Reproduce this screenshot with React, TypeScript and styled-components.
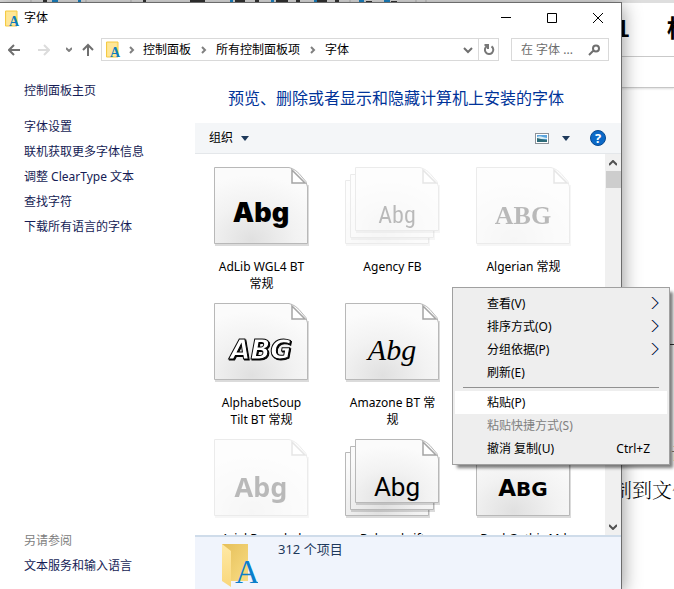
import React from 'react';
import styled, { createGlobalStyle, css } from 'styled-components';

const Global = createGlobalStyle`
  * { box-sizing: border-box; }
  html, body, #root { height: 100%; margin: 0; }
  body {
    overflow: hidden;
    background: #fff;
    color: #000;
    font: 12px/18px "Noto Sans", "Noto Sans CJK SC", sans-serif;
  }
  button, input { font: inherit; color: inherit; }
  button { padding: 0; border: 0; background: none; }
  svg { display: block; flex: none; }
`;

const Desktop = styled.div`
  position: relative;
  height: 100vh;
  overflow: hidden;
`;

/* ---------- document behind the window ---------- */

const Document = styled.div`
  display: flex;
  flex-direction: column;
  height: 100%;
`;
const Ribbon = styled.div`
  height: 3px;
  overflow: hidden;
  background: #dedede;
`;
const Gallery = styled.div`
  display: flex;
  justify-content: flex-end;
  height: 54px;
  padding-top: 10px;
  border-bottom: 1px solid #c8c8c8;
  font: bold 24px/32px "Liberation Sans", "Noto Sans CJK SC", sans-serif;
`;
const StyleName = styled.span<{ $width: number }>`
  width: ${p => p.$width}px;
  overflow: hidden;
  white-space: nowrap;
`;
const Ruler = styled.div`
  height: 31px;
  border-bottom: 1px solid #c6c6c6;
  box-shadow: 0 1px 2px #ddd;
`;
const Paper = styled.div`
  display: flex;
  flex-direction: column;
  align-items: flex-end;
  padding-top: 256px;
  font: 300 20px/38px "Noto Serif CJK SC", "Noto Sans CJK SC", serif;
`;
const Rule = styled.div`
  width: 4px;
  height: 1px;
  margin-bottom: 88px;
  background: #333;
`;
const DocLine = styled.div<{ $width: number }>`
  width: ${p => p.$width}px;
  overflow: hidden;
  white-space: nowrap;
`;

/* ---------- window frame ---------- */

const Window = styled.main`
  position: absolute;
  inset: 2px 52px 0 0;
  display: flex;
  flex-direction: column;
  border: solid #6c6c6c;
  border-width: 1px 1px 0 0;
  background: #fff;
  box-shadow: 0 4px 18px rgba(0, 0, 0, 0.45);
`;
const TitleBar = styled.header`
  display: flex;
  align-items: center;
  height: 30px;
  padding-left: 5px;
  gap: 4px;
`;
const Title = styled.h1`
  flex: 1;
  margin: 0;
  font-size: 12px;
  font-weight: 400;
`;
const CaptionButtons = styled.div`
  display: flex;
`;
const CaptionButton = styled.button`
  display: grid;
  place-items: center;
  width: 46px;
  height: 30px;
`;
const NavBar = styled.nav`
  display: flex;
  align-items: center;
  height: 33px;
  padding: 0 12px 0 6px;
`;
const NavButton = styled.button<{ $width: number; $before?: number }>`
  display: grid;
  place-items: center;
  width: ${p => p.$width}px;
  height: 22px;
  margin-left: ${p => p.$before ?? 0}px;
`;
const Address = styled.div`
  display: flex;
  align-items: center;
  flex: 1;
  height: 23px;
  margin-left: 3px;
  padding-left: 4px;
  border: 1px solid #d9d9d9;
`;
const Crumb = styled.button`
  white-space: nowrap;
`;
const CrumbGap = styled.span<{ $width: number }>`
  display: grid;
  place-items: center;
  width: ${p => p.$width}px;
`;
const AddressEnd = styled.div`
  display: flex;
  align-self: stretch;
  margin-left: auto;
`;
const RefreshButton = styled.button`
  display: grid;
  place-items: center;
  width: 20px;
  border-left: 1px solid #d9d9d9;
`;
const Search = styled.label`
  display: flex;
  align-items: center;
  width: 98px;
  height: 23px;
  margin-left: 12px;
  padding: 0 8px 0 9px;
  border: 1px solid #d9d9d9;
`;
const SearchInput = styled.input`
  flex: 1;
  min-width: 0;
  padding: 0;
  border: 0;
  outline: 0;
  background: none;
  &::placeholder { color: #6d6d6d; opacity: 1; }
`;

/* ---------- body ---------- */

const Body = styled.div`
  display: flex;
  flex: 1;
  min-height: 0;
`;
const Sidebar = styled.aside`
  display: flex;
  flex-direction: column;
  width: 195px;
  padding: 12px 0 11px 24px;
`;
const SideLink = styled.a<{ $first?: boolean }>`
  height: 25px;
  line-height: 25px;
  color: #151c55;
  text-decoration: none;
  ${p => p.$first && css`margin-bottom: 11px;`}
`;
const SeeAlso = styled.div`
  margin-top: auto;
  line-height: 25px;
  color: #808080;
`;
const Content = styled.section`
  display: flex;
  flex: 1;
  flex-direction: column;
  min-width: 0;
`;
const Heading = styled.h2`
  margin: 0;
  padding: 21px 0 14px 33px;
  color: #003399;
  font-size: 16px;
  font-weight: 400;
  line-height: 22px;
  white-space: nowrap;
`;
const Toolbar = styled.div`
  display: flex;
  align-items: center;
  height: 31px;
  flex: none;
  padding: 0 15px 0 14px;
  border-bottom: 1px solid #e4e7ea;
  background: #f4f6f8;
`;
const ToolButton = styled.button<{ $push?: boolean; $gap?: number }>`
  display: flex;
  align-items: center;
  gap: ${p => p.$gap ?? 0}px;
  ${p => p.$push && css`margin-left: auto;`}
`;
const HelpButton = styled.button`
  margin-left: 20px;
`;
const FileArea = styled.div`
  display: flex;
  flex: 1;
  min-height: 0;
`;
const FontGrid = styled.div`
  display: grid;
  grid-template-columns: repeat(auto-fill, 131px);
  grid-auto-rows: 136px;
  flex: 1;
  padding: 12px 0 0 1px;
  overflow: hidden;
`;
const Tile = styled.figure`
  display: flex;
  flex-direction: column;
  align-items: center;
  margin: 0;
`;
const TileName = styled.figcaption`
  width: 92px;
  margin-top: 12px;
  line-height: 17px;
  text-align: center;
`;
const ScrollBar = styled.div`
  display: flex;
  flex-direction: column;
  align-items: center;
  width: 16px;
  background: #f0f0f0;
`;
const ScrollButton = styled.button`
  display: grid;
  place-items: center;
  width: 16px;
  height: 17px;
`;
const Thumb = styled.div`
  width: 15px;
  height: 17px;
  margin-bottom: auto;
  background: #cdcdcd;
`;
const StatusBar = styled.footer`
  display: flex;
  flex: none;
  height: 54px;
  padding: 3px 0 0 25px;
  gap: 20px;
  overflow: hidden;
  border-top: 2px solid #cfdcea;
  background: #f0f4fc;
  color: #1e395b;
  font-size: 13px;
`;

/* ---------- context menu ---------- */

const Menu = styled.div`
  position: absolute;
  top: 287px;
  right: 4px;
  width: 218px;
  padding: 4px 2px;
  border: 1px solid #a0a0a0;
  background: #eee;
  box-shadow: 4px 4px 3px -1px rgba(0, 0, 0, 0.5);
`;
const MenuItem = styled.button<{ $active?: boolean }>`
  display: flex;
  align-items: center;
  justify-content: space-between;
  width: 100%;
  height: 23px;
  padding: 0 8px 0 32px;
  background: ${p => (p.$active ? '#fff' : 'none')};
  &:disabled { color: #808080; }
`;
const Shortcut = styled.span`
  margin-right: 9px;
`;
const Separator = styled.hr`
  height: 1px;
  margin: 3px 8px;
  border: 0;
  background: #919191;
`;

/* ---------- drawings ---------- */

const RibbonMarks = () => (
  <svg width="674" height="3">
    <path d="M31 0V3M86 0V3M131 0V3M350 0V3M416 0V3M426 0V3" stroke="#b5b5b5" />
    <path d="M43 1h4M143 1h3M190 1h15M235 1h10M255 1h4M276 1h12M296 1h4M317 1h10M335 1h4M366 2h6M391 2h6" stroke="#333" strokeWidth="2" />
    <path d="M52 1h6M78 1h3M230 1h3M271 1h3M314 1h3M359 1h5M384 1h6" stroke="#1a83c4" strokeWidth="2" />
  </svg>
);

const FontFolder = () => (
  <svg width="15" height="17" viewBox="0 0 15 17">
    <path d="M.5 1h11.5v15H.5z" fill="#ffe48e" stroke="#f4ca43" />
    <path d="M2 2h8v13H2z" fill="#ffe797" />
    <text x="4" y="16" fontFamily="Liberation Serif, serif" fontSize="14" fontWeight="700" fill="#0c7dbd">A</text>
  </svg>
);

const LargeFolder = () => (
  <svg width="38" height="48" viewBox="0 0 38 48">
    <defs>
      <linearGradient id="back" x2="1" y2="1"><stop stopColor="#e5bf59" /><stop offset="1" stopColor="#f9dc83" /></linearGradient>
      <linearGradient id="flap" x2="0" y2="1"><stop stopColor="#ffe9a5" /><stop offset="1" stopColor="#f9d77b" /></linearGradient>
    </defs>
    <path d="M2 4h26v37H2z" fill="url(#back)" />
    <path d="M2 4l9 7v36L2 41z" fill="url(#flap)" />
    <text x="15" y="43" fontFamily="Liberation Serif, serif" fontSize="34" fill="#0a7fcb">A</text>
  </svg>
);

type StrokeProps = { d: string; w: number; h: number; color?: string; sw?: number };
const Stroke = ({ d, w, h, color = '#6f6f6f', sw = 2 }: StrokeProps) => (
  <svg width={w} height={h} viewBox={`0 0 ${w} ${h}`} fill="none" stroke={color} strokeWidth={sw}>
    <path d={d} />
  </svg>
);

const CrumbSeparator = ({ width = 25 }: { width?: number }) => (
  <CrumbGap $width={width}><Stroke w={6} h={8} d="M1 1l3 3-3 3" color="#808080" /></CrumbGap>
);

const DownTriangle = () => (
  <svg width="8" height="5"><path d="M0 0h8L4 5z" fill="#1e395b" /></svg>
);

const ViewIcon = () => (
  <svg width="14" height="11" viewBox="0 0 14 11">
    <rect x=".5" y=".5" width="13" height="10" fill="#fff" stroke="#8d9299" />
    <path d="M2 2h10v7H2z" fill="#5ba4dd" />
    <path d="M2 4c3-2 5 0 10 1v1H2z" fill="#d9edf5" />
    <path d="M2 5l4 1 6 1v2H2z" fill="#2d6b79" />
  </svg>
);

const HelpIcon = () => (
  <svg width="16" height="16" viewBox="0 0 16 16">
    <circle cx="8" cy="8" r="7.5" fill="#0b69c7" stroke="#084a91" />
    <text x="8" y="12.5" textAnchor="middle" fontFamily="Open Sans, sans-serif" fontWeight="700" fontSize="13" fill="#fff">?</text>
  </svg>
);

const SubmenuArrow = () => (
  <svg width="8" height="14" viewBox="0 0 8 14" fill="none">
    <path d="M0 0l6 6-6 6" stroke="#f0b988" />
    <path d="M2 0l6 6-6 6" stroke="#6fb4f2" />
    <path d="M1 0l6 6-6 6" stroke="#3c3c66" />
  </svg>
);

type Sample = {
  text: string;
  family: string;
  size: number;
  weight?: number;
  italic?: boolean;
  outline?: boolean;
  restSize?: number;
  baseline?: number;
};
type FontEntry = { name: string; stacked?: boolean; hidden?: boolean; sample: Sample };

const PageShape = ({ x, y, w, h }: { x: number; y: number; w: number; h: number }) => (
  <g transform={`translate(${x} ${y})`}>
    <path d={`M1 ${h + 1}H${w}V18`} fill="none" stroke="#000" strokeOpacity=".14" strokeWidth="2" />
    <path d={`M.5 .5H${w - 19}Q${w - 12} 2 ${w - 6} 10Q${w - 1} 14 ${w - 0.5} 20V${h - 0.5}H.5z`} fill="url(#sheet)" stroke="#b8b8b8" />
  </g>
);

const FontIcon = ({ entry }: { entry: FontEntry }) => {
  const { sample: s, stacked, hidden } = entry;
  const left = stacked ? 10 : 0;
  const w = stacked ? 84 : 94;
  const h = stacked ? 64 : 77;
  const fold = left + w;
  return (
    <svg width="96" height="80" viewBox="0 0 96 80" opacity={hidden ? 0.27 : 1}>
      <defs>
        <radialGradient id="sheet" cx=".4" cy=".95" r=".85">
          <stop stopColor="#e0e0e0" /><stop offset=".55" stopColor="#f2f2f2" /><stop offset="1" stopColor="#fbfbfb" />
        </radialGradient>
      </defs>
      {stacked && <PageShape x={0} y={14} w={84} h={64} />}
      {stacked && <PageShape x={5} y={8} w={84} h={64} />}
      <PageShape x={left} y={1} w={w} h={h} />
      <path d={`M${fold - 16} 4V17H${fold - 3}z`} fill="#fff" stroke="#a5a5a5" strokeWidth="1.5" />
      <text
        x={stacked ? 52 : 47}
        y={s.baseline ?? 56}
        textAnchor="middle"
        fontFamily={s.family}
        fontSize={s.size}
        fontWeight={s.weight ?? 400}
        fontStyle={s.italic ? 'italic' : 'normal'}
        fill={s.outline ? '#fff' : '#000'}
        stroke={s.outline ? '#000' : 'none'}
        filter={s.outline ? 'drop-shadow(1px 1px 0 #000)' : undefined}
      >
        {s.restSize ? <>{s.text[0]}<tspan fontSize={s.restSize}>{s.text.slice(1)}</tspan></> : s.text}
      </text>
    </svg>
  );
};

// null keeps a cell of the grid empty
const fonts: (FontEntry | null)[] = [
  { name: 'AdLib WGL4 BT 常规', sample: { text: 'Abg', family: 'Inter, sans-serif', size: 27, weight: 900 } },
  { name: 'Agency FB', stacked: true, hidden: true, sample: { text: 'Abg', family: '"Liberation Sans Narrow", "Roboto Condensed", Roboto, sans-serif', size: 24, baseline: 57 } },
  { name: 'Algerian 常规', hidden: true, sample: { text: 'ABG', family: '"Liberation Serif", serif', size: 26, weight: 700, baseline: 58 } },
  { name: 'AlphabetSoup Tilt BT 常规', sample: { text: 'ABG', family: '"DejaVu Sans", sans-serif', size: 26, weight: 700, italic: true, outline: true, baseline: 57 } },
  { name: 'Amazone BT 常规', sample: { text: 'Abg', family: '"Liberation Serif", cursive', size: 30, italic: true, baseline: 58 } },
  null,
  { name: 'Arial Rounded MT 粗体', hidden: true, sample: { text: 'Abg', family: '"Noto Sans", sans-serif', size: 27, weight: 700, baseline: 59 } },
  { name: 'Bahnschrift', stacked: true, sample: { text: 'Abg', family: 'Roboto, sans-serif', size: 26, baseline: 58 } },
  { name: 'BankGothic Md BT', sample: { text: 'ABG', family: '"DejaVu Sans", sans-serif', size: 23, restSize: 20, weight: 700, baseline: 58 } },
];

const tasks = ['控制面板主页', '字体设置', '联机获取更多字体信息', '调整 ClearType 文本', '查找字符', '下载所有语言的字体'];

export default function App() {
  return (
    <>
      <Global />
      <Desktop>
        <Document>
          <Ribbon><RibbonMarks /></Ribbon>
          <Gallery>
            <StyleName $width={51}>1</StyleName>
            <StyleName $width={7}>标</StyleName>
          </Gallery>
          <Ruler />
          <Paper>
            <Rule />
            <DocLine $width={3}>击</DocLine>
            <DocLine $width={62}>制到文件</DocLine>
          </Paper>
        </Document>

        <Window>
          <TitleBar>
            <FontFolder />
            <Title>字体</Title>
            <CaptionButtons>
              <CaptionButton aria-label="最小化"><Stroke w={10} h={10} d="M0 4.5h10" color="#000" sw={1} /></CaptionButton>
              <CaptionButton aria-label="最大化"><Stroke w={10} h={10} d="M.5.5h9v9h-9z" color="#000" sw={1} /></CaptionButton>
              <CaptionButton aria-label="关闭"><Stroke w={10} h={10} d="M0 0l10 10M10 0L0 10" color="#000" sw={1} /></CaptionButton>
            </CaptionButtons>
          </TitleBar>
          <NavBar>
            <NavButton $width={16} aria-label="后退"><Stroke w={12} h={12} d="M12 6H1M6 1L1 6l5 5" /></NavButton>
            <NavButton $width={44} aria-label="前进" disabled><Stroke w={12} h={12} d="M0 6h11M6 1l5 5-5 5" color="#dcdcdc" /></NavButton>
            <NavButton $width={4} aria-label="最近位置"><Stroke w={6} h={5} d="M0 1l3 3 3-3" color="#808080" /></NavButton>
            <NavButton $width={20} $before={8} aria-label="向上"><Stroke w={12} h={13} d="M6 13V2M1 7l5-5 5 5" /></NavButton>
            <Address>
              <FontFolder />
              <CrumbSeparator width={22} />
              <Crumb>控制面板</Crumb>
              <CrumbSeparator />
              <Crumb>所有控制面板项</Crumb>
              <CrumbSeparator />
              <Crumb>字体</Crumb>
              <AddressEnd>
                <NavButton $width={20} aria-label="展开"><Stroke w={10} h={7} d="M1 1l4 4 4-4" /></NavButton>
                <RefreshButton aria-label="刷新">
                  <Stroke w={12} h={13} d="M4 3.2A4.2 4.2 0 1 0 8.5 3.4M1.5 2H5v4" color="#777" />
                </RefreshButton>
              </AddressEnd>
            </Address>
            <Search>
              <SearchInput placeholder="在 字体 ..." aria-label="搜索字体" />
              <Stroke w={12} h={12} d="M1 11l5-5M11 4.5a3 3 0 1 1-6 0 3 3 0 1 1 6 0" />
            </Search>
          </NavBar>

          <Body>
            <Sidebar>
              {tasks.map((t, i) => <SideLink key={t} href="#" $first={i === 0}>{t}</SideLink>)}
              <SeeAlso>另请参阅</SeeAlso>
              <SideLink href="#">文本服务和输入语言</SideLink>
            </Sidebar>
            <Content>
              <Heading>预览、删除或者显示和隐藏计算机上安装的字体</Heading>
              <Toolbar>
                <ToolButton $gap={8}>组织 <DownTriangle /></ToolButton>
                <ToolButton $push $gap={13} aria-label="更改视图"><ViewIcon /><DownTriangle /></ToolButton>
                <HelpButton aria-label="帮助"><HelpIcon /></HelpButton>
              </Toolbar>
              <FileArea>
                <FontGrid>
                  {fonts.map((f, i) => (
                    <Tile key={i}>
                      {f && <><FontIcon entry={f} /><TileName>{f.name}</TileName></>}
                    </Tile>
                  ))}
                </FontGrid>
                <ScrollBar>
                  <ScrollButton aria-label="向上滚动"><Stroke w={8} h={6} d="M0 5l4-4 4 4" color="#505050" /></ScrollButton>
                  <Thumb />
                  <ScrollButton aria-label="向下滚动"><Stroke w={8} h={6} d="M0 1l4 4 4-4" color="#505050" /></ScrollButton>
                </ScrollBar>
              </FileArea>
              <StatusBar>
                <LargeFolder />
                312 个项目
              </StatusBar>
            </Content>
          </Body>
        </Window>

        <Menu role="menu">
          <MenuItem role="menuitem">查看(V)<SubmenuArrow /></MenuItem>
          <MenuItem role="menuitem">排序方式(O)<SubmenuArrow /></MenuItem>
          <MenuItem role="menuitem">分组依据(P)<SubmenuArrow /></MenuItem>
          <MenuItem role="menuitem">刷新(E)</MenuItem>
          <Separator />
          <MenuItem role="menuitem" $active>粘贴(P)</MenuItem>
          <MenuItem role="menuitem" disabled>粘贴快捷方式(S)</MenuItem>
          <MenuItem role="menuitem">撤消 复制(U)<Shortcut>Ctrl+Z</Shortcut></MenuItem>
        </Menu>
      </Desktop>
    </>
  );
}
